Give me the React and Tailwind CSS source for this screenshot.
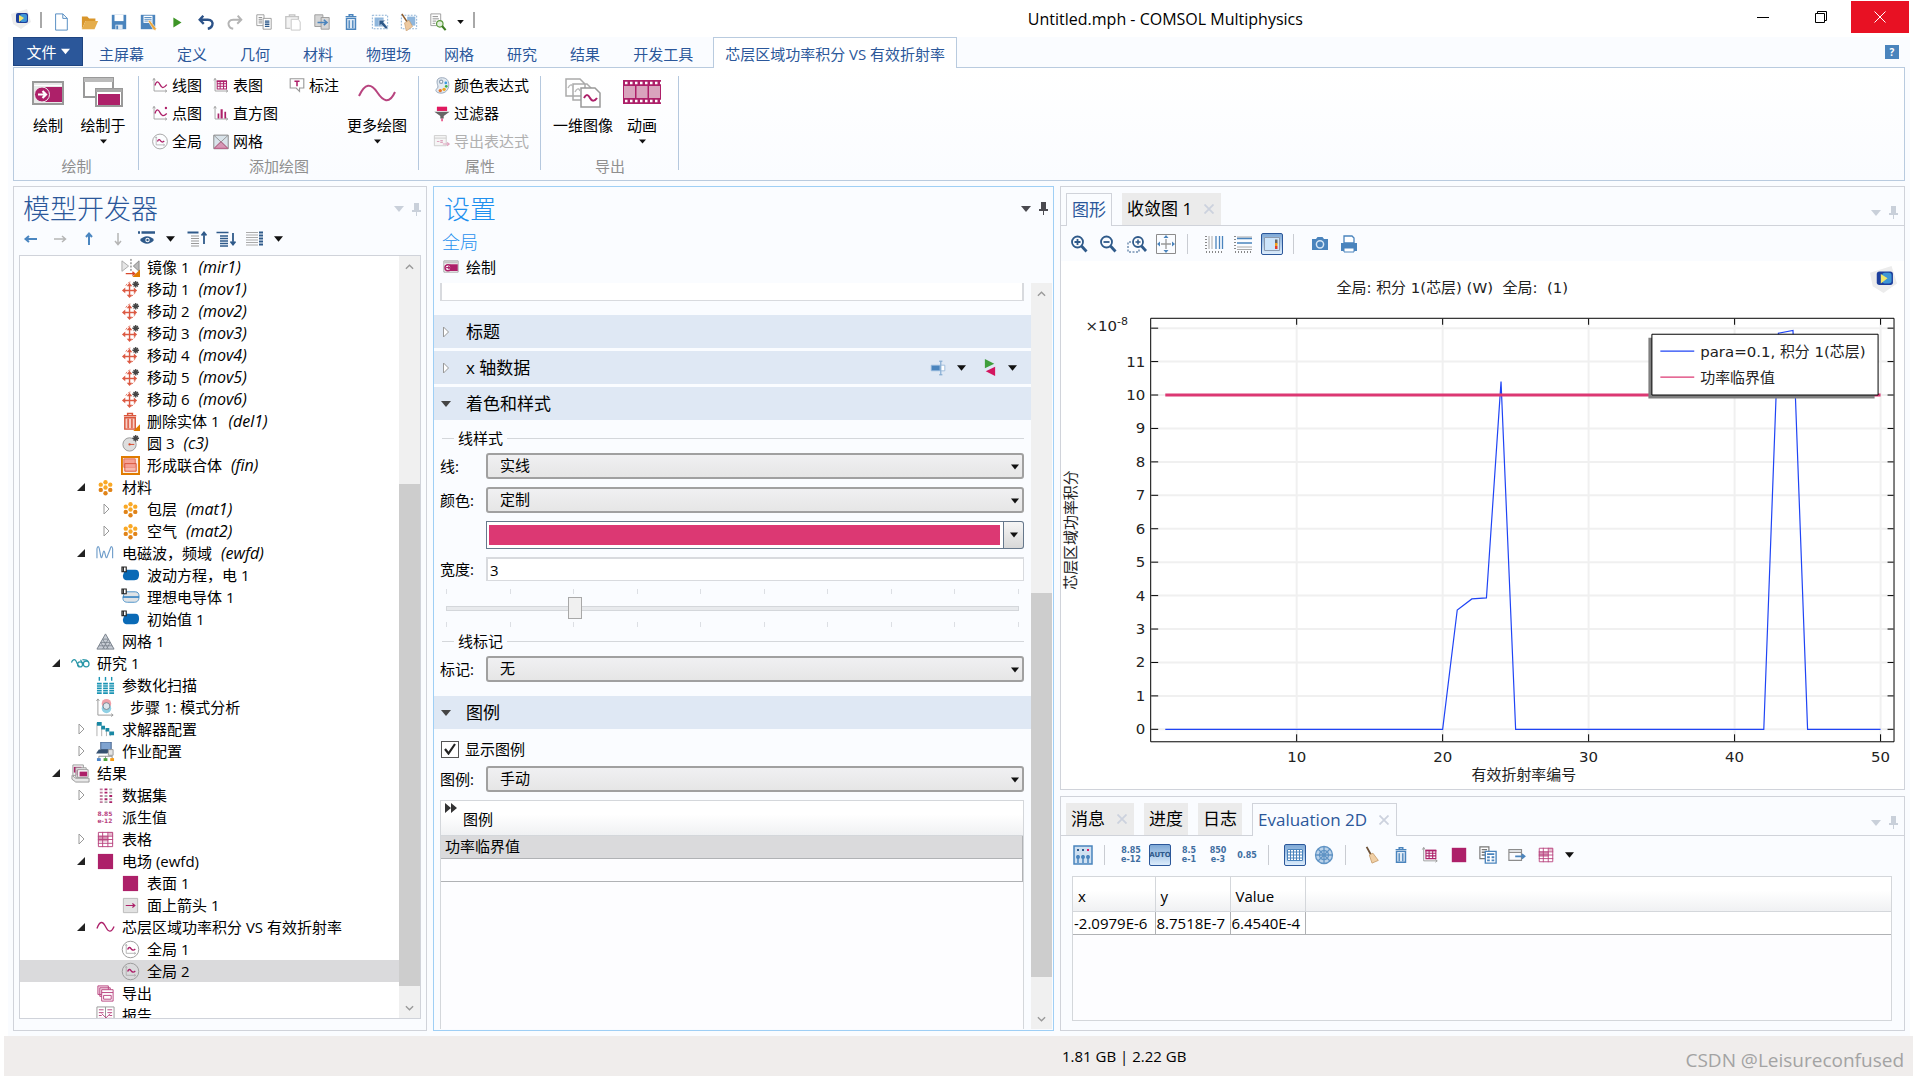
import React, { useState } from 'react';

const M = '#ad2069';
const B = '#4a84bd';
const D = '#2f5a8a';
const G = '#8c8c8c';

const AXES = <path d="M3 2v14.500h15M1.500 4L3 1.500 4.500 4M16 15l2 1.500L16 18" stroke="#999" />;
const STAR = <path d="M15.500 1v7M12 4.500h7M13.200 2.200l4.600 4.600M17.800 2.200l-4.600 4.600" stroke="#444" strokeWidth="1.400" />;
const DOMAIN_TAG = <path d="M1 1h4.500v5H1zM2.500 1v5" stroke="#222" fill="#fff" strokeWidth="1.200" />;

/* every drawing sits on a 20 x 20 grid */
const ICONS = {
  comsol: (
    <>
      <path d="M0 5L16 0l4 13-10 7-8-5z" fill="#ececec" />
      <rect x="5" y="4" width="12" height="10" rx="2" fill="#1d3f9c" />
      <rect x="9" y="5" width="7" height="8" rx="2" fill="#3f96d6" />
      <path d="M8 6l5 3-5 4z" fill="#f3e76a" />
    </>
  ),
  newFile: <path d="M4 1h8l5 5v13H4zM12 1v5h5" stroke={B} fill="#fff" />,
  open: (
    <>
      <path d="M1 18V4h6l2 2h7v3H5z" fill="#d9962b" />
      <path d="M1 18L5 9h14l-4 9z" fill="#e5ad4c" />
    </>
  ),
  save: (
    <>
      <path d="M2 2h16v16H2z" fill={B} />
      <path d="M5 2h10v7H5z" fill="#fff" />
      <path d="M6 13h8v5H6z" fill="#dfe9f3" />
      <path d="M7 14h2v4H7z" fill={B} />
    </>
  ),
  saveAs: (
    <>
      <path d="M2 2h16v16H2z" fill={B} />
      <path d="M5 3h10v8H5z" fill="#fff" />
      <path d="M6 5h8M6 7h8M6 9h8" stroke={B} />
      <path d="M10 9l2-1 7 9-0.500 2.500L16 18.500z" fill="#eba63c" stroke="#fff" strokeWidth="0.600" />
    </>
  ),
  play: <path d="M6 5l9 5.500L6 16z" fill="#3d9526" />,
  undo: <path d="M7 3L3 7.500 7.500 12M3.500 7.500H12c4 0 6 2.500 5 6-0.600 2-2 3.500-5 4" stroke="#2c5288" strokeWidth="2.600" />,
  redo: <path d="M13 3l4 4.500-4.500 4.500M16.500 7.500H8C4 7.500 2 10 3 13.500c0.600 2 2 3.500 5 4" stroke="#b4b4b4" strokeWidth="2.200" />,
  copy: (
    <>
      <path d="M2 2h8v12H2z" stroke="#999" fill="#fff" />
      <path d="M4 5h4M4 7h4M4 9h4M4 11h4" stroke="#888" />
      <path d="M9 6h9v12H9z" stroke="#999" fill="#fff" />
      <path d="M11 9h5M11 11h5M11 13h5M11 15h5" stroke={D} strokeWidth="1.300" />
    </>
  ),
  paste: (
    <>
      <path d="M7 17H2V4h14v3M6 4V2h6v2" stroke="#c4c4c4" fill="#f3f3f3" strokeWidth="1.500" />
      <path d="M8 7h8l2 3v9H8z" stroke="#c4c4c4" fill="#fff" />
    </>
  ),
  duplicate: (
    <>
      <path d="M2 2h9v13H2z" stroke="#999" fill="#d6d6d6" />
      <path d="M9 5h9v13H9z" stroke="#999" fill="#d6d6d6" />
      <path d="M5 10.500h10M12 7.500l3.500 3-3.500 3" stroke={B} strokeWidth="1.800" />
    </>
  ),
  trash: (
    <>
      <path d="M4 4h12M8 4V2h4v2" stroke={B} strokeWidth="1.600" />
      <path d="M5 6h10v12H5z" stroke={B} strokeWidth="1.600" fill="#dfeaf5" />
      <path d="M8 8v9M12 8v9" stroke={B} strokeWidth="1.500" />
    </>
  ),
  select: (
    <>
      <path d="M1.500 2.500h17v15h-17z" stroke="#7fa8d0" strokeDasharray="2 1.500" />
      <path d="M4 5h10v10H4z" fill="#8fb6dc" />
      <path d="M9 8h7l-2.300 2 5 6-2 2-5.500-5.500L9 15z" fill={D} stroke="#fff" strokeWidth="0.500" />
    </>
  ),
  clearSelect: (
    <>
      <path d="M1.500 2.500h17v15h-17z" stroke="#7fa8d0" strokeDasharray="2 1.500" />
      <path d="M8 4h9v10H8z" fill="#8fb6dc" />
      <path d="M2 1l6 9" stroke="#8b5a2b" strokeWidth="1.600" />
      <path d="M5 11l5-3 4 7-7 5z" fill="#edc9a0" stroke="#c79a6b" strokeWidth="0.700" />
    </>
  ),
  report: (
    <>
      <path d="M2 1h11v13H2z" stroke="#999" fill="#fff" />
      <path d="M4 4h6M4 6.500h7M4 9h4M4 11.500h3" stroke="#888" />
      <circle cx="12" cy="12" r="3.600" stroke="#5b9a3c" fill="#e3f0dc" strokeWidth="1.300" />
      <path d="M14.500 14.500l4 4.500" stroke="#3d7d22" strokeWidth="2.400" />
    </>
  ),
  line: <>{AXES}<path d="M4 10c2-6 4-5 6-1s4 5 8 0" stroke={M} strokeWidth="1.500" /></>,
  point: <>{AXES}<path d="M4 10c2-6 4-5 6-1s4 5 8 1" stroke={M} strokeWidth="1.500" /><circle cx="17" cy="3.500" r="1.400" fill={M} /></>,
  tablePlot: <>{AXES}<path d="M5.500 5h11v9h-11zM5.500 8h11M5.500 11h11M9 5v9M13 5v9" stroke={M} strokeWidth="1.200" /><path d="M5 4h12v2H5z" fill={M} /></>,
  histogram: <>{AXES}<path d="M6 10h2v6H6zM9.500 5h2.500v11H9.500zM14 8h2v8h-2z" fill={M} /></>,
  global: (
    <>
      <circle cx="10" cy="10" r="8.700" stroke="#999" />
      <path d="M5.500 5v9H15M4.500 6l1-1.500 1 1.500M14 13l1.500 1-1.500 1" stroke="#aaa" strokeWidth="0.900" />
      <path d="M7 10c1-3 2.500-2.500 3.500-1s2.500 2.500 4.500 0.500" stroke={M} strokeWidth="1.500" />
    </>
  ),
  mesh2: (
    <>
      <path d="M1.500 2.500h17v16h-17z" fill="#d9e3ea" stroke="#777" />
      <path d="M10 10l8 8H2z" fill="#d795b5" />
      <path d="M2 3l16 15M18 3L2 18" stroke={G} />
      <path d="M10 10l8 8H2z" stroke="#c0507f" />
    </>
  ),
  annotation: (
    <>
      <path d="M2 2h16v11h-5v4l-4-4H2z" stroke="#999" fill="#fff" strokeWidth="1.300" />
      <path d="M7 5h6M10 5v6" stroke={M} strokeWidth="1.800" />
    </>
  ),
  palette: (
    <>
      <path d="M8 1c7-1 10 3 10 8 0 6-4 10-9 10-4 0-7-2-6-4s3-2 2-5S3 2 8 1z" fill="#e3eaf1" stroke="#8a9bb0" />
      <circle cx="9" cy="5.500" r="2.600" fill="#8fa1b5" />
      <circle cx="9" cy="5.500" r="1.200" fill="#fff" />
      <circle cx="14.500" cy="7" r="1.600" fill="#3c9be0" />
      <circle cx="15" cy="11" r="1.600" fill="#3fae49" />
      <circle cx="12.500" cy="14.500" r="2" fill="#f0a81c" />
      <circle cx="8" cy="16" r="2" fill="#e8752c" />
    </>
  ),
  filter: (
    <>
      <path d="M4 2h12v5H4z" fill="#e0195f" />
      <path d="M1 8h18l-7 5v3H8v-3z" fill="#666" />
      <path d="M9.300 16h1.500v3H9.300z" fill="#e0195f" />
    </>
  ),
  exportExpr: (
    <>
      <path d="M1 3h14v12H1zM1 6h14" stroke="#c9c9c9" fill="#f5f5f5" />
      <path d="M4 10h3M8 9h3M8 11h3M11 13h7M16 11l2.500 2-2.500 2" stroke="#dfa5c0" strokeWidth="1.300" />
    </>
  ),
  arrowLeft: <path d="M16 10H5M8 7l-3.500 3L8 13" stroke="#4a86c0" strokeWidth="2" />,
  arrowRight: <path d="M4 10h11M12 7l3.500 3-3.500 3" stroke="#b5b5b5" strokeWidth="1.500" />,
  arrowUp: <path d="M10 16V5M7 8l3-3.500L13 8" stroke="#4a86c0" strokeWidth="2" />,
  arrowDown: <path d="M10 4v11M7 12l3 3.500 3-3.500" stroke="#b5b5b5" strokeWidth="1.500" />,
  eye: (
    <>
      <path d="M1 3.500h2M4.500 3.500H18" stroke="#2f5a8a" strokeWidth="2.400" />
      <path d="M3 11c4-5 10-5 14 0-4 5-10 5-14 0z" fill="#2f5a8a" />
      <circle cx="10.500" cy="11" r="2.200" fill="#fff" />
      <circle cx="10.500" cy="11" r="1.200" fill="#2f5a8a" />
    </>
  ),
  collapse: (
    <>
      <path d="M0.500 3.500h11" stroke="#2f5a8a" strokeWidth="2" />
      <path d="M4 7h8M4 9.500h8M4 12h8M4 14.500h8M4 17h8" stroke="#999" />
      <path d="M17 15V4M14.500 6.500L17 3.500l2.500 3" stroke="#2f5a8a" strokeWidth="1.800" />
    </>
  ),
  expand: (
    <>
      <path d="M0.500 3.500h12M4 7h8M4 9.500h8M4 12h8M4 14.500h8M4 17h8" stroke="#2f5a8a" strokeWidth="1.500" />
      <path d="M17 4v11M14.500 12.500l2.500 3 2.500-3" stroke="#2f5a8a" strokeWidth="1.800" />
    </>
  ),
  columns: (
    <>
      <path d="M1 3.500h12M1 6h12M1 8.500h12M1 11h12M1 13.500h12M1 16h12" stroke="#aaa" />
      <path d="M16 2.500v15" stroke="#2f5a8a" strokeWidth="4" strokeDasharray="2 1" />
    </>
  ),
  mirror: (
    <>
      <path d="M1 3l7 5.500L1 14z" fill="#e6e6e6" stroke="#aaa" />
      <path d="M19 3l-6 5.500 6 5.500z" fill="#bbb" stroke="#888" />
      <path d="M10.500 1v14" stroke="#555" strokeDasharray="2 1.500" />
      <path d="M20 12v8h-8z" fill="#e07b00" />
      <path d="M5 16.500h9M12 14.500l2.500 2-2.500 2" stroke="#d9482b" strokeWidth="1.400" />
    </>
  ),
  move: (
    <>
      <path d="M5 6c1-2 3-4 6-4M15 13c-1 2-2 3-4 4" stroke="#e0705c" strokeDasharray="2.500 1.500" />
      <path d="M9 6v10M4 11h10" stroke="#dc5a43" strokeWidth="1.500" />
      <path d="M9 3l3 3.500H6zM9 19l3-3.500H6zM1 11l3.500-3v6zM17 11l-3.500-3v6z" fill="#dc5a43" />
      {STAR}
    </>
  ),
  deleteEntity: (
    <>
      <path d="M3 4h13M7 4V1.500h5V4" stroke="#d9553b" strokeWidth="1.600" />
      <path d="M4 6h11v12H4z" stroke="#d9553b" fill="#f7cfc6" strokeWidth="1.500" />
      <path d="M7.500 7v10M11.500 7v10" stroke="#d9553b" strokeWidth="1.500" />
      <path d="M20 13v7h-7z" fill="#e07b00" />
    </>
  ),
  circle: <><circle cx="9" cy="11" r="7" fill="#dedede" stroke="#999" /><path d="M9 11h5" stroke="#d9482b" /><circle cx="9" cy="11" r="1.200" fill="#d9482b" />{STAR}</>,
  union: (
    <>
      <path d="M1 1h18v18H1z" fill="#fbeee6" stroke="#e07b00" strokeWidth="2" />
      <path d="M3 3h12v9H3z" fill="#f5a193" stroke="#e0705c" />
      <path d="M4 8h12v8H4z" fill="#f5a193" fillOpacity="0.700" stroke="#d9553b" />
    </>
  ),
  material: (
    <>
      {[[10, 3.5], [5, 6], [15, 6], [10, 9], [5, 11.5], [15, 11.5], [10, 15]].map(([x, y], i) => (
        <circle key={i} cx={x} cy={y + 1} r="2.300" fill={i > 3 ? '#e08318' : '#f9a825'} />
      ))}
    </>
  ),
  wave: <path d="M1 15V5c0.500-3 2-3 2.500 0l1.500 8c0.500 2 1 2 1.500 0l1-4c0.500-2 1.200-2 1.700 0l1 4c0.500 2 1.200 2 1.700 0L15 5c0.500-3 2-3 2.500 0v10" stroke="#6f9dca" strokeWidth="1.200" />,
  domain: <><path d="M4 4h11c3 0 4 2 4 5s-1 6-5 6H7c-4 0-5-2-5-5z" fill="#0a6ab6" />{DOMAIN_TAG}</>,
  conductor: <><path d="M4 4h11c3 0 4 2 4 5s-1 6-5 6H7c-4 0-5-2-5-5z" fill="#dfe3e6" stroke="#4a90c8" /><path d="M2 9.500h17" stroke="#2a7cc0" strokeWidth="1.600" />{DOMAIN_TAG}</>,
  mesh: <><path d="M10 2l9 16H1z" fill="#c9ced6" stroke="#777f8a" /><path d="M7 7.500h6M5 11h10M3 14.500h14M7 7.500L13 18M5 11l4 7M13 7.500L7 18M15 11l-4 7" stroke="#777f8a" strokeWidth="0.800" /></>,
  study: (
    <>
      <path d="M0.500 9c1-3 3-4 4.500-2s1.500 5 4 6M10 6l3 5M12 6c2 0 5 0 6 2" stroke="#2a97a8" strokeWidth="1.300" />
      <circle cx="9.500" cy="11" r="2.600" stroke="#2a97a8" strokeWidth="1.300" />
      <circle cx="16" cy="10.500" r="3" stroke="#2a97a8" strokeWidth="1.300" />
    </>
  ),
  sweep: (
    <>
      {[1, 7.5, 14].map((x) => (
        <g key={x}>
          <path d={`M${x} 8h5M${x} 10.500h5M${x} 13h5M${x} 15.500h5M${x} 18h5`} stroke="#1a94b4" strokeWidth="1.700" />
          <path d={`M${x + 2.5} 1v4`} stroke="#1a94b4" strokeWidth="1.500" />
        </g>
      ))}
    </>
  ),
  mode: (
    <>
      <path d="M2 1v17h16M0.500 3L2 1l1.500 2M16 16.500l2 1.500-2 1.500" stroke="#999" />
      <circle cx="11" cy="6" r="5" fill="#f0a0a8" />
      <circle cx="11" cy="11" r="5" fill="#8fd0e4" />
      <circle cx="11" cy="8.500" r="3.600" stroke="#7b8794" fill="#dde6ec" />
    </>
  ),
  solver: <><path d="M1 3v14M6 7v10M11 10v7M15 13v4" stroke="#999" strokeWidth="0.800" /><path d="M1 2h5v4H1zM5.500 6h4v4h-4zM10 8.500h4V12h-4zM14 12h5v4h-5z" fill="#1a88a4" /></>,
  job: (
    <>
      <path d="M5 0h11v8H5z" fill="#7fa3d0" stroke="#44618a" />
      <path d="M3 8h12l-3 4H0z" fill="#35506f" />
      <path d="M13 8h5v6h-5z" fill="#e3e3e3" stroke="#999" />
      <path d="M3 18v-3h14v3M10 15v3" stroke={G} />
      <path d="M1 17h4v3H1z" fill="#4a84c8" /><path d="M8 17h4v3H8z" fill="#4aa53c" /><path d="M15 17h4v3h-4z" fill="#f79a12" />
    </>
  ),
  results: (
    <>
      <path d="M2 1h11v11H2z" fill="#f4f4f4" stroke="#999" /><path d="M3 3h8v6H3z" fill={M} />
      <path d="M5 4h11v10H5z" fill="#f4f4f4" stroke="#999" /><path d="M6 6h8v6H6z" fill={M} />
      <path d="M7 6h11v8H7z" fill="#fff" stroke="#999" /><path d="M9 8h8v5H9z" fill={M} />
      <path d="M1 12l4 3h14v4H5L1 16z" fill="#e8e8e8" stroke="#999" />
    </>
  ),
  dataset: <><path d="M4 3.500h3M4 7h3M4 10.500h3M4 14h3M4 17h3" stroke="#c07a9d" strokeWidth="2" /><path d="M9 3.500h3M9 7h3M14 10.500h3M9 14h3M14 17h3" stroke={M} strokeWidth="2" /><path d="M14 3.500h3M14 7h3M9 10.500h3M14 14h3M9 17h3" stroke="#aaa" strokeWidth="2" /></>,
  grid: (
    <>
      <path d="M2 2h16v16H2z" fill="#fff" />
      <path d="M2 6h11v6H2z" fill="#d795b5" />
      <path d="M13 2h5v4h-5z" fill="#e7bccf" />
      <path d="M2.500 2.500h15v15h-15zM2 6.500h16M2 10h16M2 14h16M7 2v16M12.500 2v16" stroke="#b8447f" />
    </>
  ),
  square: <path d="M2 2h16v16H2z" fill={M} />,
  arrowSurface: <><path d="M2.500 2.500h15v15h-15z" fill="#e2e2e2" stroke="#bbb" /><path d="M5 10h9M12 8l2.500 2-2.500 2" stroke={M} strokeWidth="1.300" /></>,
  curve: <path d="M1 11c3-8 6-8 9-2s6 7 9 0" stroke={M} strokeWidth="1.400" />,
  exportNode: (
    <>
      <path d="M2 2h11v9H2zM4 4h11v9H4z" fill="#f7e3ec" stroke="#b8447f" />
      <path d="M6 6h12v12H6z" fill="#fff" stroke="#b8447f" />
      <path d="M6 9h12M8 12h8v4H8z" stroke="#b8447f" />
    </>
  ),
  reportNode: <><path d="M1 1h9v18H1zM10 1h9v18h-9z" fill="#fff" stroke="#999" /><path d="M3 4h5M3 7h5M3 10h3M3 13h5M12 4h5M12 7h5M14 10h3M12 13h5M6 8l5 5M15 8l-5 5" stroke="#b8447f" /></>,
  zoomIn: <><circle cx="8.500" cy="8" r="5.500" stroke={D} strokeWidth="1.800" /><path d="M12.500 12l5 5.500" stroke={D} strokeWidth="2.800" /><path d="M8.500 5v6M5.500 8h6" stroke={D} strokeWidth="1.800" /></>,
  zoomOut: <><circle cx="8.500" cy="8" r="5.500" stroke={D} strokeWidth="1.800" /><path d="M12.500 12l5 5.500" stroke={D} strokeWidth="2.800" /><path d="M5.500 8h6" stroke={D} strokeWidth="1.800" /></>,
  zoomBox: <><path d="M4 8H1v10h11v-3" stroke={D} strokeDasharray="2 1.500" /><circle cx="11" cy="8" r="5" fill="#fff" stroke={D} strokeWidth="1.800" /><path d="M14.500 12l4.500 5" stroke={D} strokeWidth="2.800" /><path d="M11 5.500v5M8.500 8h5" stroke={D} strokeWidth="1.500" /></>,
  extents: <><path d="M0.500 0.500h19v19H0.500z" stroke={G} /><path d="M10 5v10M5 10h10" stroke="#999" strokeWidth="1.300" /><path d="M10 1l2.500 3h-5zM10 19l2.500-3h-5zM1 10l3-2.500v5zM19 10l-3-2.500v5z" fill={B} /></>,
  gridX: <><path d="M5 2v13M8 2v13" stroke="#aaa" /><path d="M12 2v13M15.500 2v13M18.500 2v13" stroke={B} strokeWidth="1.300" /><path d="M2 2v14M2 18h17" stroke="#888" strokeWidth="2" strokeDasharray="1 2" /></>,
  gridY: <><path d="M4 3h15M4 13h15M4 15.500h15" stroke="#aaa" /><path d="M4 4.500h15M4 9h15" stroke={B} strokeWidth="1.400" /><path d="M2 2v14M2 18h17" stroke="#888" strokeWidth="2" strokeDasharray="1 2" /></>,
  legend: <><path d="M2.500 3.500h15v13h-15z" fill="#cde5fb" stroke="#8b9bb0" /><path d="M13 5.500h2.500v4H13z" fill="#666" /><path d="M13 9h2.500v3H13z" fill="#f5a11c" /><path d="M13 12h2.500v3H13z" fill="#e23b2e" /></>,
  camera: <><path d="M2 5h4l1.500-2h5L14 5h4v11H2z" fill={B} /><circle cx="10" cy="10.300" r="3.600" stroke="#d5e5f4" strokeWidth="1.500" /></>,
  printer: <><path d="M5 2h8l2 2v5H5z" fill="#fff" stroke={B} strokeWidth="1.300" /><path d="M2 9h16v8H2z" fill={B} /><path d="M5 14h10v4H5z" fill="#fff" stroke={B} /></>,
  precision: <><path d="M1 1h18v18H1z" fill="#cfe0f1" stroke={B} strokeWidth="1.500" /><path d="M4 5h2M9 5h2" stroke={D} strokeWidth="2" /><path d="M14 5h2" stroke="#e0195f" strokeWidth="2" /><path d="M5 10v8M10 10v8M15 10v8" stroke={B} strokeWidth="1.500" /><circle cx="5" cy="12" r="2" fill={B} /><circle cx="10" cy="12" r="2" fill={B} /><circle cx="15" cy="12" r="2" fill={B} /></>,
  tableView: <><path d="M2 4h16v12H2z" fill="#fff" /><path d="M2.500 4.500h15v11h-15zM2 7h16M2 10h16M2 13h16M5.500 4v12M8.500 4v12M11.500 4v12M14.500 4v12" stroke={B} /></>,
  globe: <><circle cx="10" cy="10" r="8.500" fill="#bcd3ea" stroke="#5f93c4" strokeWidth="1.300" /><circle cx="10" cy="10" r="4.500" stroke="#5f93c4" strokeWidth="1.300" /><path d="M10 1.500v17M1.500 10h17M4 4l12 12M16 4L4 16" stroke="#5f93c4" strokeWidth="1.300" /></>,
  broom: <><path d="M4 1l5 9" stroke="#6d5238" strokeWidth="2" /><path d="M7 10l4-2 6 8-7 3z" fill="#f0cfa5" stroke="#c9a06f" /></>,
  copyTable: <><path d="M1 1h10v13H1z" fill="#fff" stroke="#777" strokeWidth="1.300" /><path d="M3 4h6M3 7h4M3 10h4" stroke="#777" strokeWidth="1.600" /><path d="M7 6h12v13H7z" fill="#fff" stroke={B} strokeWidth="1.500" /><path d="M9 9h8M9 12.500h3M9 16h3M14 12.500h3M14 16h3" stroke={B} strokeWidth="2" /></>,
  exportTable: <><path d="M1 4h14v12H1zM1 7h14" stroke={G} strokeWidth="1.300" /><path d="M8 11.500h10M15.500 9l3 2.500-3 2.500" stroke={B} strokeWidth="1.800" /></>,
  rename: <><path d="M1.500 6.500h11v7h-11z" fill={B} stroke="#9fc0e0" /><path d="M14 6.500h4.500v7H14" stroke="#8fb2d6" fill="#fff" /><path d="M13.500 2v16M11.500 1.500h4M11.500 18.500h4" stroke="#6f9dca" strokeWidth="1.200" /></>,
  swap: <><path d="M4 0l11 5.500L4 11z" fill="#3f9f3c" /><path d="M16 9v11L5 14.500z" fill="#d3165f" /></>,
  plot: (
    <>
      <path d="M0.500 2.500h19v15h-19z" fill="#fff" stroke={G} />
      <path d="M1 3h18v3H1z" fill="#c4c4c4" />
      <path d="M8 7h11v9H8z" fill={M} />
      <circle cx="6" cy="11.500" r="4" fill="#fff" stroke={M} strokeWidth="2" />
      <path d="M3.500 11.500h5M6.500 9.500l2 2-2 2" stroke={M} strokeWidth="1.400" />
    </>
  ),
};

const Icon = ({ name, className = 'w-5 h-5' }) => (
  <svg viewBox="0 0 20 20" fill="none" className={`shrink-0 ${className}`} aria-hidden="true">
    {ICONS[name]}
  </svg>
);

const Caret = ({ color = '#111', className = 'w-[9px] h-[6px]' }) => (
  <svg viewBox="0 0 10 6" className={`shrink-0 ${className}`} aria-hidden="true">
    <path d="M0 0h10L5 6z" fill={color} />
  </svg>
);

const Pin = ({ color }) => (
  <svg viewBox="0 0 9 13" className="w-[9px] h-[13px] shrink-0" aria-hidden="true">
    <path d="M2 0h5v7h2v2H5v4H4V9H0V7h2z" fill={color} />
  </svg>
);

const PanelControls = ({ color = '#c9d0da' }) => (
  <div className="flex items-center gap-2">
    <button type="button" aria-label="面板菜单"><Caret color={color} className="w-[10px] h-[6px]" /></button>
    <button type="button" aria-label="固定面板"><Pin color={color} /></button>
  </div>
);

const QUICK = ['newFile', 'open', 'save', 'saveAs', 'play', 'undo', 'redo', 'copy', 'paste', 'duplicate', 'trash', 'select', 'clearSelect', 'report'];

const TitleBar = () => (
  <header className="grid grid-cols-[1020fr_auto_608fr] h-[37px] shrink-0 pl-[11px] pr-[9px] bg-white">
    <div className="flex items-center gap-[9px] pt-[6px]">
      <Icon name="comsol" className="w-5 h-5 mb-[6px]" />
      <span className="w-[2px] h-4 bg-[#a8a8a8] mb-1" />
      {QUICK.map((name) => (
        <button key={name} type="button" aria-label={name}><Icon name={name} className="w-5 h-[18px]" /></button>
      ))}
      <button type="button" aria-label="自定义"><Caret className="w-[7px] h-[4px]" /></button>
      <span className="w-[2px] h-4 bg-[#a8a8a8] mb-1" />
    </div>
    <h1 className="self-center text-[16px] leading-5 text-black">Untitled.mph - COMSOL Multiphysics</h1>
    <div className="flex justify-end items-start pt-px">
      <button type="button" aria-label="最小化" className="w-[57px] h-8 flex items-center justify-center">
        <span className="w-3 h-px bg-black" />
      </button>
      <button type="button" aria-label="还原" className="w-[60px] h-8 flex items-center justify-center">
        <svg viewBox="0 0 12 12" className="w-3 h-3" fill="none" stroke="#000"><path d="M0.500 2.500h9v9h-9zM2.500 2.500v-2h9v9h-2" /></svg>
      </button>
      <button type="button" aria-label="关闭" className="w-[58px] h-8 bg-[#e81123] flex items-center justify-center">
        <svg viewBox="0 0 12 12" className="w-3 h-3" fill="none" stroke="#fff"><path d="M0.500 0.500l11 11M11.500 0.500l-11 11" /></svg>
      </button>
    </div>
  </header>
);

const TABS = ['主屏幕', '定义', '几何', '材料', '物理场', '网格', '研究', '结果', '开发工具'];

const RibbonTabs = () => (
  <nav className="flex items-end h-[30px] shrink-0 text-[15px] leading-5 text-[#2b579a]">
    <button type="button" className="w-[70px] h-[29px] mb-px flex items-center justify-center gap-1 bg-[#2b579a] border border-[#1e4480] text-white">
      文件<Caret color="#fff" className="w-[9px] h-[7px]" />
    </button>
    <div className="flex gap-[33px] pl-4 pr-5 h-[26px] items-center">
      {TABS.map((t) => <button key={t} type="button">{t}</button>)}
    </div>
    <button type="button" className="relative z-10 -mb-px h-[31px] px-[11px] pt-[2px] bg-white border border-b-0 border-[#b9cbdf]">
      芯层区域功率积分 VS 有效折射率
    </button>
    <button type="button" className="ml-auto mr-[6px] mb-2 w-[14px] h-[14px] bg-[#4a84bd] text-white text-[10px] leading-[14px] font-bold">?</button>
  </nav>
);

const RibbonGroup = ({ label, className = '', children }) => (
  <section className={`flex shrink-0 ${className}`}>
    <div className="flex-1 flex flex-col">
      <div className="flex h-[88px]">{children}</div>
      <h2 className="h-5 pl-px text-center text-[15px] leading-5 text-[#8f8f8f]">{label}</h2>
    </div>
    <span className="w-px h-[94px] mt-2 bg-[#b5c8de]" />
  </section>
);

const BigButton = ({ label, menu, className, children }) => (
  <button type="button" className={`flex flex-col items-center pt-2 ${className}`}>
    <span className="h-[39px]">{children}</span>
    <span className="text-[15px] leading-5 whitespace-nowrap">{label}</span>
    {menu && <Caret className="w-[7px] h-[5px] mt-1" />}
  </button>
);

const SmallButton = ({ icon, label, disabled }) => (
  <button type="button" disabled={disabled} className="flex items-center gap-[3px] h-7 text-[15px] leading-5 whitespace-nowrap disabled:text-[#b0b0b0]">
    <Icon name={icon} className="w-[18px] h-[17px]" />{label}
  </button>
);

const Ribbon = () => (
  <div className="flex h-[114px] shrink-0 border border-[#b9cbdf] bg-linear-to-b from-white to-[#fafcff]">
    <RibbonGroup label="绘制" className="w-[125px]">
      <BigButton label="绘制" className="w-[38px] ml-[15px]">
        <svg viewBox="0 0 32 24" className="w-8 h-6 mt-[5px]" fill="none">
          <path d="M1 1h30v22H1z" fill="#e9e9e9" stroke="#999" strokeWidth="2" />
          <path d="M2 4.500h28" stroke="#fff" />
          <path d="M13 6h17v15H13z" fill={M} />
          <circle cx="10" cy="13.500" r="7.500" fill={M} stroke="#eee" />
          <path d="M6 13.500h8M10.500 10l3.500 3.500-3.500 3.500" stroke="#fff" strokeWidth="2.200" />
        </svg>
      </BigButton>
      <BigButton label="绘制于" menu className="w-[60px] ml-[6px]">
        <svg viewBox="0 0 40 30" className="w-10 h-[30px] mt-px" fill="none">
          <path d="M1 1h29v19H1z" fill="#fff" stroke="#999" strokeWidth="2" />
          <path d="M1 1h29v4H1z" fill="#bbb" />
          <path d="M13 12h26v17H13z" fill="#fff" stroke="#999" strokeWidth="2" />
          <path d="M13 12h26v3H13z" fill="#aaa" />
          <path d="M15 17h22v11H15z" fill={M} />
        </svg>
      </BigButton>
    </RibbonGroup>
    <RibbonGroup label="添加绘图" className="w-[280px]">
      <div className="flex flex-col items-start ml-3 pt-[3px]">
        <SmallButton icon="line" label="线图" />
        <SmallButton icon="point" label="点图" />
        <SmallButton icon="global" label="全局" />
      </div>
      <div className="flex flex-col items-start ml-[10px] pt-[3px]">
        <SmallButton icon="tablePlot" label="表图" />
        <SmallButton icon="histogram" label="直方图" />
        <SmallButton icon="mesh2" label="网格" />
      </div>
      <div className="ml-[10px] pt-[3px]">
        <SmallButton icon="annotation" label="标注" />
      </div>
      <BigButton label="更多绘图" menu className="ml-2">
        <svg viewBox="0 0 38 22" className="w-[38px] h-[22px] mt-[7px]" fill="none">
          <path d="M1 13C7 0 13 0 19 9s12 13 18 0" stroke="#b8447f" strokeWidth="2" />
        </svg>
      </BigButton>
    </RibbonGroup>
    <RibbonGroup label="属性" className="w-[122px]">
      <div className="flex flex-col items-start ml-[14px] pt-[3px]">
        <SmallButton icon="palette" label="颜色表达式" />
        <SmallButton icon="filter" label="过滤器" />
        <SmallButton icon="exportExpr" label="导出表达式" disabled />
      </div>
    </RibbonGroup>
    <RibbonGroup label="导出" className="w-[138px]">
      <BigButton label="一维图像" className="ml-3">
        <svg viewBox="0 0 36 30" className="w-9 h-[30px] mt-[2px]" fill="none">
          <path d="M1 1h14l5 5v12H1zM8 6h14l4 4v12H8z" fill="#fff" stroke="#aaa" strokeWidth="1.500" />
          <path d="M16 10h14l5 5v14H16z" fill="#fff" stroke="#999" strokeWidth="1.500" />
          <path d="M3 10c2-4 4-4 5-1M10 14c2-4 4-4 5-1" stroke="#bbb" strokeWidth="1.500" />
          <path d="M19 20c2-4 4-4 6 0s5 3 7 0" stroke={M} strokeWidth="2" />
        </svg>
      </BigButton>
      <BigButton label="动画" menu className="w-[38px] ml-[10px]">
        <svg viewBox="0 0 38 24" className="w-[38px] h-6 mt-1" fill="none">
          <path d="M0 0h38v24H0z" fill={M} />
          <path d="M1 6h11v12H1zM13.500 6h11v12h-11zM26 6h11v12H26z" fill="#d9a3bd" />
          <path d="M2 3h36M2 21h36" stroke="#fff" strokeWidth="2.500" strokeDasharray="2.500 2.500" />
        </svg>
      </BigButton>
    </RibbonGroup>
  </div>
);

const TREE = [
  { level: 2, icon: 'mirror', label: '镜像 1', tag: 'mir1' },
  { level: 2, icon: 'move', label: '移动 1', tag: 'mov1' },
  { level: 2, icon: 'move', label: '移动 2', tag: 'mov2' },
  { level: 2, icon: 'move', label: '移动 3', tag: 'mov3' },
  { level: 2, icon: 'move', label: '移动 4', tag: 'mov4' },
  { level: 2, icon: 'move', label: '移动 5', tag: 'mov5' },
  { level: 2, icon: 'move', label: '移动 6', tag: 'mov6' },
  { level: 2, icon: 'deleteEntity', label: '删除实体 1', tag: 'del1' },
  { level: 2, icon: 'circle', label: '圆 3', tag: 'c3' },
  { level: 2, icon: 'union', label: '形成联合体', tag: 'fin' },
  { level: 1, icon: 'material', label: '材料', open: true },
  { level: 2, icon: 'material', label: '包层', tag: 'mat1', open: false },
  { level: 2, icon: 'material', label: '空气', tag: 'mat2', open: false },
  { level: 1, icon: 'wave', label: '电磁波，频域', tag: 'ewfd', open: true },
  { level: 2, icon: 'domain', label: '波动方程，电 1' },
  { level: 2, icon: 'conductor', label: '理想电导体 1' },
  { level: 2, icon: 'domain', label: '初始值 1' },
  { level: 1, icon: 'mesh', label: '网格 1' },
  { level: 0, icon: 'study', label: '研究 1', open: true },
  { level: 1, icon: 'sweep', label: '参数化扫描' },
  { level: 1, icon: 'mode', label: '步骤 1: 模式分析', inset: true },
  { level: 1, icon: 'solver', label: '求解器配置', open: false },
  { level: 1, icon: 'job', label: '作业配置', open: false },
  { level: 0, icon: 'results', label: '结果', open: true },
  { level: 1, icon: 'dataset', label: '数据集', open: false },
  { level: 1, icon: 'derived', label: '派生值' },
  { level: 1, icon: 'grid', label: '表格', open: false },
  { level: 1, icon: 'square', label: '电场 (ewfd)', open: true },
  { level: 2, icon: 'square', label: '表面 1' },
  { level: 2, icon: 'arrowSurface', label: '面上箭头 1' },
  { level: 1, icon: 'curve', label: '芯层区域功率积分 VS 有效折射率', open: true },
  { level: 2, icon: 'global', label: '全局 1' },
  { level: 2, icon: 'global', label: '全局 2' },
  { level: 1, icon: 'exportNode', label: '导出' },
  { level: 1, icon: 'reportNode', label: '报告' },
];

const INDENT = ['pl-[31px]', 'pl-[56px]', 'pl-[81px]'];

const Twisty = ({ open }) => (
  <svg viewBox="0 0 10 12" className="w-[10px] h-3 shrink-0" fill="none" aria-hidden="true">
    {open === true && <path d="M9 2v8H1z" fill="#222" />}
    {open === false && <path d="M3 1l5 5-5 5z" stroke="#999" />}
  </svg>
);

const StackedDigits = ({ top, bottom, className }) => (
  <span className={`flex flex-col items-center justify-center w-5 h-5 shrink-0 font-[DejaVu_Sans,sans-serif] font-bold ${className}`}>
    <span>{top}</span>
    {bottom && <span>{bottom}</span>}
  </span>
);

const Scrollbar = ({ before, thumb, after, className }) => (
  <div className={`flex flex-col shrink-0 bg-[#f0f0f0] ${className}`} aria-hidden="true">
    <svg viewBox="0 0 10 6" className="w-[9px] h-[6px] mx-auto my-2 shrink-0" fill="none" stroke="#999" strokeWidth="1.500"><path d="M1 5l4-4 4 4" /></svg>
    <span style={{ flexGrow: before }} />
    <span className="bg-[#cdcdcd]" style={{ flexGrow: thumb }} />
    <span style={{ flexGrow: after }} />
    <svg viewBox="0 0 10 6" className="w-[9px] h-[6px] mx-auto my-[7px] shrink-0" fill="none" stroke="#999" strokeWidth="1.500"><path d="M1 1l4 4 4-4" /></svg>
  </div>
);

const ModelBuilder = () => {
  const [selected, setSelected] = useState('全局 2');

  return (
    <section className="flex flex-col min-h-0 min-w-0 border border-[#d0d3da]">
      <div className="flex items-center justify-between h-[41px] shrink-0 pt-[3px] pl-[9px] pr-[5px]">
        <h2 className="text-[27px] leading-9 font-light text-[#2b579a]">模型开发器</h2>
        <PanelControls />
      </div>
      <div className="flex items-center gap-[9px] h-[22px] shrink-0 pl-[7px]">
        {['arrowLeft', 'arrowRight', 'arrowUp', 'arrowDown', 'eye'].map((n) => (
          <button key={n} type="button" aria-label={n}><Icon name={n} /></button>
        ))}
        <button type="button" aria-label="显示选项" className="w-3"><Caret /></button>
        {['collapse', 'expand', 'columns'].map((n) => (
          <button key={n} type="button" aria-label={n}><Icon name={n} /></button>
        ))}
        <button type="button" aria-label="列选项"><Caret /></button>
      </div>
      <div className="flex flex-1 min-h-0 mt-[5px] mx-[5px] mb-[11px] border border-[#d0d3da] bg-white overflow-hidden">
        <ul className="flex-1 min-w-0 text-[15px] leading-[22px] text-black">
          {TREE.map((node) => (
            <li key={node.label} className={selected === node.label ? 'bg-[#dadadc]' : ''}>
              <button
                type="button"
                onClick={() => setSelected(node.label)}
                className={`flex items-center w-full h-[22px] text-left whitespace-pre ${INDENT[node.level]}`}
              >
                <Twisty open={node.open} />
                {node.icon === 'derived' ? (
                  <StackedDigits top="8.85" bottom="e-12" className="ml-[9px] text-[6px] leading-[7px] text-[#b8447f]" />
                ) : (
                  <Icon name={node.icon} className="w-[19px] h-[19px] ml-[10px]" />
                )}
                <span className={node.inset ? 'ml-[15px]' : 'ml-[7px]'}>{node.label}</span>
                {node.tag && <i className="ml-[9px] text-[16px]">({node.tag})</i>}
              </button>
            </li>
          ))}
        </ul>
        <Scrollbar before={205} thumb={500} after={12} className="w-[21px]" />
      </div>
    </section>
  );
};

const SectionHeader = ({ label, open, children }) => (
  <div className="flex items-center h-[33px] shrink-0 mb-[3px] pl-[6px] pr-[14px] bg-[#dfe8f4]">
    <svg viewBox="0 0 12 12" className="w-3 h-3" fill="none" aria-hidden="true">
      {open ? <path d="M1 3h10L6 9z" fill="#444" /> : <path d="M3.500 1l5 5-5 5z" fill="#fff" stroke="#999" />}
    </svg>
    <h3 className="ml-[14px] text-[17px] leading-6 text-black">{label}</h3>
    {children}
  </div>
);

const FieldLegend = ({ label }) => (
  <div className="flex items-center gap-1 h-[22px] pl-[2px] text-[15px] leading-5">
    <span className="w-3 h-px bg-[#d4d7db]" />
    {label}
    <span className="flex-1 h-px bg-[#d4d7db]" />
  </div>
);

const SelectRow = ({ id, label, options }) => (
  <div className="flex items-center h-[26px]">
    <label htmlFor={id} className="w-[46px] shrink-0">{label}:</label>
    <div className="relative flex-1 h-full">
      <select id={id} className="appearance-none w-full h-full pl-3 pb-[2px] border-2 border-[#a0a0a0] rounded-[3px] bg-linear-to-b from-[#f0f0f2] to-[#e6e6e6] leading-5">
        {options.map((o) => <option key={o}>{o}</option>)}
      </select>
      <span className="absolute right-[5px] top-[11px] flex pointer-events-none"><Caret className="w-2 h-[6px]" /></span>
    </div>
  </div>
);

const Ticks = () => (
  <div className="flex justify-between h-[5px]">
    {Array.from({ length: 10 }, (_, i) => <span key={i} className="w-px h-full bg-[#dcdfe4]" />)}
  </div>
);

const Settings = () => {
  const [width, setWidth] = useState('3');
  const [step, setStep] = useState(1.95);
  const [showLegend, setShowLegend] = useState(true);

  return (
    <section className="flex flex-col min-h-0 min-w-0 border border-[#9fcff5] text-[15px] leading-5 text-black">
      <div className="flex items-center justify-between h-[43px] shrink-0 pl-[10px] pr-[5px]">
        <h2 className="text-[26px] leading-9 font-light text-[#1e90ee]">设置</h2>
        <PanelControls color="#4a4a50" />
      </div>
      <div className="h-6 shrink-0 pl-2 text-[18px] leading-6 font-light text-[#1e90ee]">全局</div>
      <button type="button" className="flex items-center gap-[7px] h-[25px] shrink-0 pl-[9px]">
        <Icon name="plot" className="w-4 h-[15px]" />绘制
      </button>
      <div className="flex flex-1 min-h-0 mt-1 mr-px mb-px">
        <div className="flex flex-col flex-1 min-w-0 overflow-hidden">
          <div className="h-[18px] shrink-0 ml-[6px] mr-[7px] mb-[14px] border-2 border-t-0 border-b border-[#d8dade] bg-white" />
          <SectionHeader label="标题" />
          <SectionHeader label="x 轴数据">
            <div className="flex items-center ml-auto">
              <button type="button" aria-label="重命名" className="mr-[10px]"><Icon name="rename" className="w-[18px] h-4" /></button>
              <button type="button" aria-label="更多" className="mr-[15px]"><Caret /></button>
              <button type="button" aria-label="交换" className="mr-[9px]"><Icon name="swap" className="w-[18px] h-[17px]" /></button>
              <button type="button" aria-label="更多选项"><Caret /></button>
            </div>
          </SectionHeader>
          <SectionHeader label="着色和样式" open />
          <div className="shrink-0 pl-[6px] pr-[7px] pt-1">
            <FieldLegend label="线样式" />
            <div className="flex flex-col gap-2 pt-1">
              <SelectRow id="line-style" label="线" options={['实线', '虚线', '点线', '无']} />
              <SelectRow id="line-color" label="颜色" options={['定制', '循环', '蓝色', '红色']} />
              <div className="flex h-7 ml-[46px]">
                <div className="flex-1 p-[2px] border border-[#66788c] bg-white">
                  <button type="button" aria-label="线颜色" className="block w-full h-full bg-[#dc3873] border-y border-r border-white" />
                </div>
                <button type="button" aria-label="选择颜色" className="flex items-center justify-center w-5 border border-l-0 border-[#66788c] rounded-r-[3px] bg-linear-to-b from-[#f6f6f6] to-[#d8d8d8]">
                  <Caret className="w-2 h-[6px]" />
                </button>
              </div>
              <div className="flex items-center h-6">
                <label htmlFor="line-width" className="w-[46px] shrink-0">宽度:</label>
                <input
                  id="line-width"
                  value={width}
                  onChange={(e) => setWidth(e.target.value)}
                  className="flex-1 h-full px-[2px] border-2 border-b border-r border-[#d8dade] bg-white"
                />
              </div>
              <div className="flex flex-col justify-between h-[38px] pl-[6px] pr-[5px]">
                <Ticks />
                <input
                  type="range"
                  min="0"
                  max="9"
                  step="0.05"
                  value={step}
                  aria-label="线宽"
                  onChange={(e) => setStep(Number(e.target.value))}
                  className="appearance-none w-full h-[5px] bg-[#e8eaed] border border-[#d4d7db] [&::-webkit-slider-thumb]:appearance-none [&::-webkit-slider-thumb]:w-[14px] [&::-webkit-slider-thumb]:h-[22px] [&::-webkit-slider-thumb]:bg-[#f0f0f0] [&::-webkit-slider-thumb]:border [&::-webkit-slider-thumb]:border-[#a8a8a8]"
                />
                <Ticks />
              </div>
            </div>
            <div className="h-[3px]" />
            <FieldLegend label="线标记" />
            <div className="pt-1 pb-[14px]">
              <SelectRow id="marker" label="标记" options={['无', '循环', '圆', '方形']} />
            </div>
          </div>
          <SectionHeader label="图例" open />
          <div className="flex flex-col flex-1 min-h-0 pl-[6px] pr-[7px] pt-[6px]">
            <label className="relative flex items-center gap-[6px] h-[22px] shrink-0 mb-[6px] pl-px">
              <input
                type="checkbox"
                checked={showLegend}
                onChange={(e) => setShowLegend(e.target.checked)}
                className="peer appearance-none w-[18px] h-[17px] border border-[#555] bg-white"
              />
              <svg viewBox="0 0 12 12" className="absolute left-1 top-[5px] w-3 h-3 hidden peer-checked:block pointer-events-none" fill="none" aria-hidden="true">
                <path d="M1 6l3.500 4.500L11 1" stroke="#222" strokeWidth="2.200" />
              </svg>
              显示图例
            </label>
            <div className="shrink-0 mb-2">
              <SelectRow id="legend-mode" label="图例" options={['手动', '自动', '求值']} />
            </div>
            <div className="flex-1 min-h-0 border border-b-0 border-[#d4d7db] bg-[#fdfdff]">
              <table className="w-full border-collapse">
                <thead>
                  <tr>
                    <th className="h-[34px] p-0 text-left font-normal align-top bg-linear-to-b from-white from-40% to-[#f0f1f3] border-b border-[#d4d7db]">
                      <svg viewBox="0 0 12 10" className="block w-3 h-[10px] ml-1 mt-[2px]" aria-hidden="true"><path d="M0 0l6 5-6 5zM6 0l6 5-6 5z" fill="#333" /></svg>
                      <span className="block -mt-1 pl-[22px] leading-5">图例</span>
                    </th>
                  </tr>
                </thead>
                <tbody>
                  <tr><td className="h-[23px] px-1 pt-0 pb-px bg-[#dadadc] border-b border-r border-[#b0b2b5]">功率临界值</td></tr>
                  <tr><td className="h-[23px] px-1 py-0 border-b border-r border-[#b0b2b5]" /></tr>
                </tbody>
              </table>
            </div>
          </div>
        </div>
        <Scrollbar before={286} thumb={381} after={32} className="w-[21px]" />
      </div>
    </section>
  );
};

const Tab = ({ label, active, closable }) => (
  <div className={`relative flex items-center gap-3 text-[17px] leading-6 whitespace-nowrap ${active ? '-mb-px h-[33px] px-[5px] bg-[#fafcff] border border-b-0 border-[#d0d3da] text-[#2b579a]' : 'h-8 px-[5px] bg-[#ebebeb] text-black'}`}>
    <button type="button" role="tab" aria-selected={!!active}>{label}</button>
    {closable && (
      <button type="button" aria-label={`关闭${label}`} className="mr-[2px]">
        <svg viewBox="0 0 10 10" className="w-[10px] h-[10px]" fill="none" stroke="#ccd2de" strokeWidth="1.800"><path d="M0.500 0.500l9 9M9.500 0.500l-9 9" /></svg>
      </button>
    )}
  </div>
);

const Sep = () => <span className="w-px h-5 ml-[2px] mr-[7px] bg-[#c9ccd2]" />;

/* plot area in svg units */
const px = (v) => 235 + (v - 10) * 14.65;
const py = (v) => 470 - v * 33.55;
const CURVE = [[1, 0], [20, 0], [21, 3.57], [22, 3.9], [23, 3.93], [24, 10.4], [25, 0], [42, 0], [43, 11.85], [44, 11.93], [45, 0], [50, 0]];

const Plot = () => (
  <svg viewBox="0 0 843 530" className="block w-full h-full font-[DejaVu_Sans,Noto_Sans_CJK_SC,sans-serif] text-[15px]" fill="#222">
    <text x="275" y="32">全局: 积分 1(芯层) (W)&#160; 全局:&#160; (1)</text>
    <text x="23" y="70">×10<tspan fontSize="11" dy="-6">-8</tspan></text>
    {[10, 20, 30, 40, 50].map((v) => (
      <g key={v}>
        <path d={`M${px(v)} 58V482`} stroke="#f0f0f0" strokeWidth="2" />
        <path d={`M${px(v)} 58v6M${px(v)} 482v-7`} stroke="#000" />
        <text x={px(v)} y="503" textAnchor="middle">{v}</text>
      </g>
    ))}
    {Array.from({ length: 13 }, (_, v) => (
      <g key={v}>
        <path d={`M89 ${py(v)}H834`} stroke="#f0f0f0" strokeWidth="2" />
        <path d={`M89 ${py(v)}h7M834 ${py(v)}h-6`} stroke="#000" />
        {v < 12 && <text x="83" y={py(v) + 5} textAnchor="end">{v}</text>}
      </g>
    ))}
    <path d="M88.500 57.500h746v425h-746z" fill="none" stroke="#000" />
    <path d={`M${CURVE.map(([x, y]) => `${px(x)} ${py(y)}`).join('L')}`} fill="none" stroke="#1f44f5" strokeWidth="1.200" />
    <path d={`M${px(1)} ${py(10)}H${px(50)}`} stroke="#dc3873" strokeWidth="3" />
    <path d="M588 77h227v61H588z" fill="#808080" />
    <path d="M591.500 73.500h227v61h-227z" fill="#fff" stroke="#000" />
    <path d="M600 90.500h34" stroke="#1f44f5" strokeWidth="1.300" />
    <path d="M600 116.500h34" stroke="#dc3873" strokeWidth="1.300" />
    <text x="640" y="96">para=0.1, 积分 1(芯层)</text>
    <text x="640" y="122">功率临界值</text>
    <text x="463" y="521" textAnchor="middle">有效折射率编号</text>
    <text transform="translate(14 270) rotate(-90)" textAnchor="middle">芯层区域功率积分</text>
  </svg>
);

const ToggleButton = ({ label, children }) => (
  <button type="button" aria-label={label} aria-pressed="true" className="flex items-center justify-center w-[22px] h-[22px] -mx-px border border-[#2b579a] rounded-[2px] bg-linear-to-b from-[#7fa9d6] to-[#dcecfb]">
    {children}
  </button>
);

const Graphics = () => (
  <section className="flex flex-col flex-[605] min-h-0 border border-[#d0d3da]">
    <div className="flex items-end gap-[10px] shrink-0 pt-[6px] pl-[5px] pr-[6px] border-b border-[#d0d3da]">
      <Tab label="图形" active />
      <Tab label="收敛图 1" closable />
      <div className="ml-auto mb-[6px]"><PanelControls /></div>
    </div>
    <div className="flex items-center gap-[9px] h-[35px] shrink-0 pl-2">
      {['zoomIn', 'zoomOut', 'zoomBox', 'extents'].map((n) => (
        <button key={n} type="button" aria-label={n}><Icon name={n} /></button>
      ))}
      <Sep />
      {['gridX', 'gridY'].map((n) => (
        <button key={n} type="button" aria-label={n}><Icon name={n} /></button>
      ))}
      <ToggleButton label="显示图例"><Icon name="legend" className="w-5 h-5" /></ToggleButton>
      <Sep />
      {['camera', 'printer'].map((n) => (
        <button key={n} type="button" aria-label={n}><Icon name={n} /></button>
      ))}
    </div>
    <div className="relative flex-1 min-h-0 bg-white">
      <Plot />
      <span className="absolute right-[7px] top-[5px]"><Icon name="comsol" className="w-[27px] h-[27px]" /></span>
    </div>
  </section>
);

const DIGITS = 'text-[8px] leading-[9px] text-[#3f6e9f]';

const Evaluation = () => (
  <section className="flex flex-col flex-[234] min-h-0 border border-[#d0d3da]">
    <div className="flex items-end gap-[10px] shrink-0 pt-[6px] pl-[5px] pr-[6px] border-b border-[#d0d3da]">
      <Tab label="消息" closable />
      <Tab label="进度" />
      <Tab label="日志" />
      <Tab label="Evaluation 2D" active closable />
      <div className="ml-auto mb-[6px]"><PanelControls /></div>
    </div>
    <div className="flex items-center gap-[9px] h-[38px] shrink-0 pl-3">
      <button type="button" aria-label="精度"><Icon name="precision" /></button>
      <Sep />
      <button type="button"><StackedDigits top="8.85" bottom="e-12" className={DIGITS} /></button>
      <ToggleButton label="自动">
        <span className="font-[DejaVu_Sans,sans-serif] font-bold text-[7px] leading-[9px] text-[#2f5a8a]">AUTO</span>
      </ToggleButton>
      <button type="button"><StackedDigits top="8.5" bottom="e-1" className={DIGITS} /></button>
      <button type="button"><StackedDigits top="850" bottom="e-3" className={DIGITS} /></button>
      <button type="button"><StackedDigits top="0.85" className={DIGITS} /></button>
      <Sep />
      <ToggleButton label="表格视图"><Icon name="tableView" /></ToggleButton>
      <button type="button" aria-label="globe"><Icon name="globe" /></button>
      <Sep />
      {['broom', 'trash', 'tablePlot', 'square', 'copyTable', 'exportTable', 'grid'].map((n) => (
        <button key={n} type="button" aria-label={n}><Icon name={n} className="w-5 h-[18px]" /></button>
      ))}
      <button type="button" aria-label="更多"><Caret /></button>
    </div>
    <div className="flex-1 min-h-0 mt-[2px] ml-[11px] mr-3 mb-[9px] border border-[#d4d7db] bg-[#fdfdff]">
      <table className="w-full table-fixed border-collapse text-[15px] leading-5 text-black">
        <colgroup>
          <col className="w-[82px]" />
          <col className="w-[75px]" />
          <col className="w-[75px]" />
          <col />
        </colgroup>
        <thead>
          <tr className="h-[34px] bg-linear-to-b from-white from-40% to-[#f0f1f3]">
            {['x', 'y', 'Value'].map((h) => (
              <th key={h} className="px-[5px] pt-1 pb-0 text-left font-normal border-r border-b border-[#d4d7db]">{h}</th>
            ))}
            <th className="p-0 border-b border-[#d4d7db]" />
          </tr>
        </thead>
        <tbody>
          <tr className="h-[23px] bg-white whitespace-nowrap">
            {['-2.0979E-6', '8.7518E-7', '6.4540E-4'].map((v) => (
              <td key={v} className="px-px py-0 border-r border-b border-[#b0b2b5]">{v}</td>
            ))}
            <td className="p-0 border-b border-[#b0b2b5]" />
          </tr>
        </tbody>
      </table>
    </div>
  </section>
);

const App = () => (
  <div className="flex flex-col h-screen overflow-hidden bg-white font-[Open_Sans,Noto_Sans_CJK_SC,sans-serif]">
    <TitleBar />
    <div className="flex flex-col flex-1 min-h-0 ml-2 mr-2 pl-[5px] pr-[5px] pb-[5px] bg-[#fafcff]">
      <RibbonTabs />
      <Ribbon />
      <main className="grid grid-cols-[414fr_621fr_845fr] gap-[6px] flex-1 min-h-0 mt-[5px]">
        <ModelBuilder />
        <Settings />
        <div className="flex flex-col gap-[6px] min-h-0 min-w-0">
          <Graphics />
          <Evaluation />
        </div>
      </main>
    </div>
    <footer className="flex items-center justify-between h-10 shrink-0 ml-1 mr-[5px] mb-px pr-[9px] bg-[#f0edec] text-[15px] leading-5">
      <span className="ml-[1058px] text-black">1.81 GB | 2.22 GB</span>
      <span className="pt-2 text-[19px] leading-6 text-[#a3a3a3]">CSDN @Leisureconfused</span>
    </footer>
  </div>
);

export default App;
